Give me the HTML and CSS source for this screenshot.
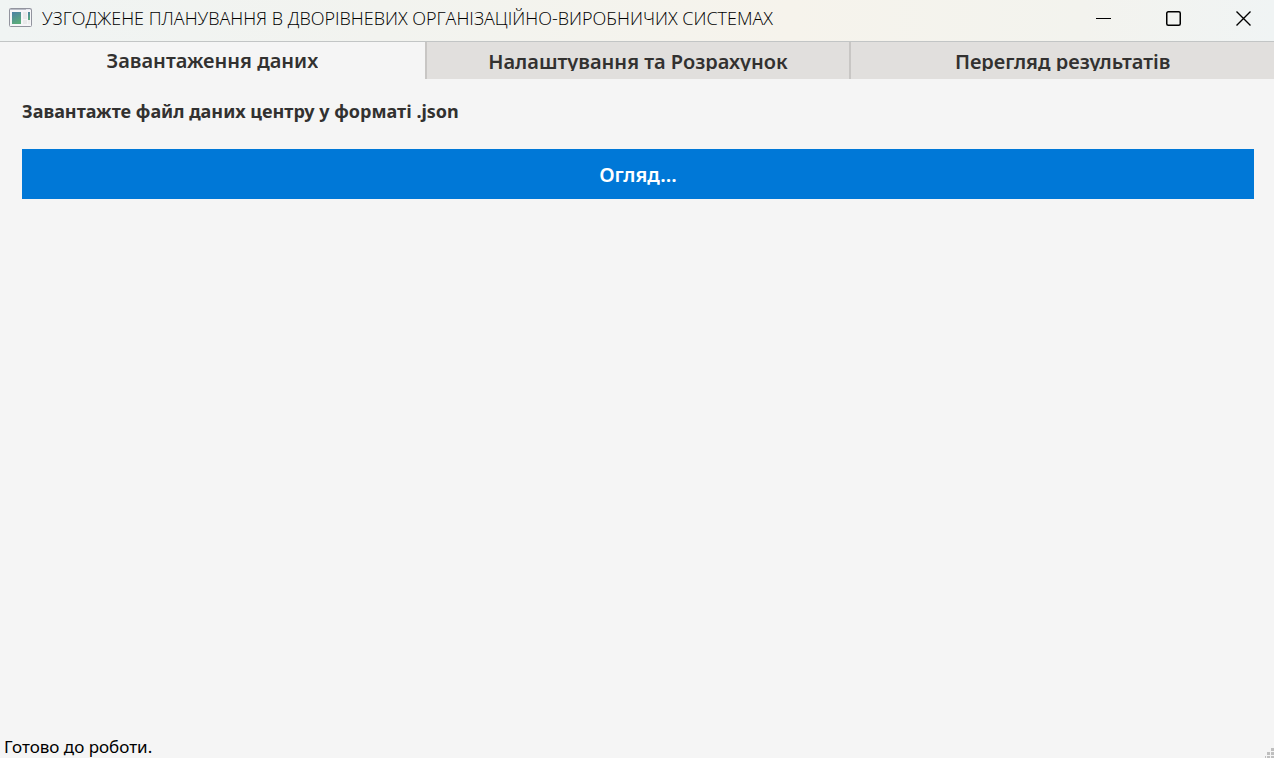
FILE: index.html
```html
<!DOCTYPE html>
<html lang="uk">
<head>
<meta charset="utf-8">
<title>Узгоджене планування</title>
<link rel="stylesheet" href="styles.css">
</head>
<body>
<div class="window">
  <header class="titlebar">
    <svg class="app-icon" width="24" height="20" viewBox="0 0 24 20" aria-hidden="true">
      <defs>
        <linearGradient id="pane" x1="0" y1="0" x2="0.4" y2="1">
          <stop offset="0" stop-color="#4b7fa5"/>
          <stop offset="1" stop-color="#5bab7c"/>
        </linearGradient>
      </defs>
      <rect x="0.5" y="0.5" width="22" height="18" rx="1" fill="#f6f6f8" stroke="#92949e"/>
      <path d="M1 1.5H22" stroke="#b9bcc6"/>
      <path d="M17 1.5H21" stroke="#e6e6ee"/>
      <rect x="3" y="4" width="9" height="12" fill="url(#pane)"/>
      <rect x="14" y="4" width="4" height="7" fill="#e9e9ea"/>
      <rect x="14" y="12" width="4" height="4" fill="#e9e9ea"/>
      <rect x="19" y="4" width="2" height="8" fill="url(#pane)"/>
      <rect x="19" y="12" width="2" height="4" fill="#eeeeee"/>
    </svg>
    <h1 class="title">УЗГОДЖЕНЕ ПЛАНУВАННЯ В ДВОРІВНЕВИХ ОРГАНІЗАЦІЙНО-ВИРОБНИЧИХ СИСТЕМАХ</h1>
    <div class="window-controls">
      <button class="window-button" type="button" aria-label="Згорнути">
        <svg width="16" height="16" viewBox="0 0 16 16"><path d="M0 8.5H15" stroke="#000"/></svg>
      </button>
      <button class="window-button" type="button" aria-label="Розгорнути">
        <svg width="16" height="16" viewBox="0 0 16 16"><rect x="0.75" y="1.75" width="13.5" height="13.5" rx="1.5" fill="none" stroke="#000" stroke-width="1.5"/></svg>
      </button>
      <button class="window-button" type="button" aria-label="Закрити">
        <svg width="16" height="16" viewBox="0 0 16 16"><path d="M0.5 1.5L14.5 15.5M14.5 1.5L0.5 15.5" stroke="#000" stroke-width="1.4"/></svg>
      </button>
    </div>
  </header>
  <nav class="tabs" role="tablist">
    <button class="tab tab-active" type="button" role="tab" aria-selected="true"><span class="tab-label">Завантаження даних</span></button>
    <button class="tab" type="button" role="tab" aria-selected="false"><span class="tab-label">Налаштування та Розрахунок</span></button>
    <button class="tab" type="button" role="tab" aria-selected="false"><span class="tab-label">Перегляд результатів</span></button>
  </nav>
  <main class="panel">
    <p class="prompt" id="prompt">Завантажте файл даних центру у форматі .json</p>
    <button class="browse" type="button" aria-describedby="prompt">Огляд...</button>
  </main>
  <footer class="statusbar">
    <span class="status">Готово до роботи.</span>
    <svg class="grip" width="9" height="10" viewBox="0 0 9 10" aria-hidden="true">
      <path d="M6 0h3v3h-3zM2 4h3v3h-3zM6 4h3v3h-3zM0 8h1v2h-1zM2 8h3v2h-3zM6 8h3v2h-3z" fill="#bfbfbf"/>
    </svg>
  </footer>
</div>
</body>
</html>
```
FILE: styles.css
```css
* {
  box-sizing: border-box;
}

body {
  margin: 0;
  background: #f5f5f5;
  color: #323130;
  font-family: "Noto Sans", "Open Sans", sans-serif;
}

button {
  margin: 0;
  padding: 0;
  border: 0;
  background: none;
  color: inherit;
  font-family: inherit;
}

.window {
  display: flex;
  flex-direction: column;
  min-height: 100vh;
}

.titlebar {
  display: flex;
  align-items: center;
  height: 42px;
  padding: 0 0 6px 9px;
  border-bottom: 1px solid #c2c5c5;
  overflow: hidden;
  background: linear-gradient(90deg, #f0f4f3 0%, #f2f3ef 30%, #f6f3ec 62%, #f3f3ee 85%, #f0f4f4 100%);
}

.app-icon {
  flex: none;
  margin-right: 9px;
}

.title {
  flex: 1;
  margin: 0;
  color: #000;
  font-family: "Open Sans", sans-serif;
  font-size: 18px;
  font-weight: 300;
  line-height: 24px;
  white-space: nowrap;
}

.window-controls {
  display: flex;
  margin-right: -5px;
}

.window-button {
  display: flex;
  align-items: center;
  justify-content: center;
  width: 70px;
  height: 35px;
}

.tabs {
  display: grid;
  grid-template-columns: repeat(3, 1fr);
  height: 37px;
}

.tab {
  display: flex;
  align-items: flex-start;
  justify-content: center;
  padding-top: 8px;
  border-left: 2px solid #c8c6c4;
  background: #e1dfdd;
  font-size: 20px;
  font-weight: 600;
}

.tab-active {
  padding-top: 7px;
  border-left: 0;
  background: #f5f5f5;
}

.tab-label {
  height: 21px;
  overflow: hidden;
  line-height: 24px;
  white-space: nowrap;
}

.tab-active .tab-label {
  height: 24px;
}

.panel {
  flex: 1;
  padding: 20px 20px 20px 22px;
}

.prompt {
  margin: 0 0 26px;
  font-size: 18px;
  font-weight: 700;
  line-height: 24px;
}

.browse {
  width: 100%;
  height: 50px;
  background: #0078d7;
  color: #fff;
  font-size: 20px;
  font-weight: 600;
}

.statusbar {
  display: flex;
  align-items: flex-end;
  justify-content: space-between;
  height: 24px;
  padding-left: 4px;
  color: #000;
  font-size: 17px;
  line-height: 22px;
}
```
